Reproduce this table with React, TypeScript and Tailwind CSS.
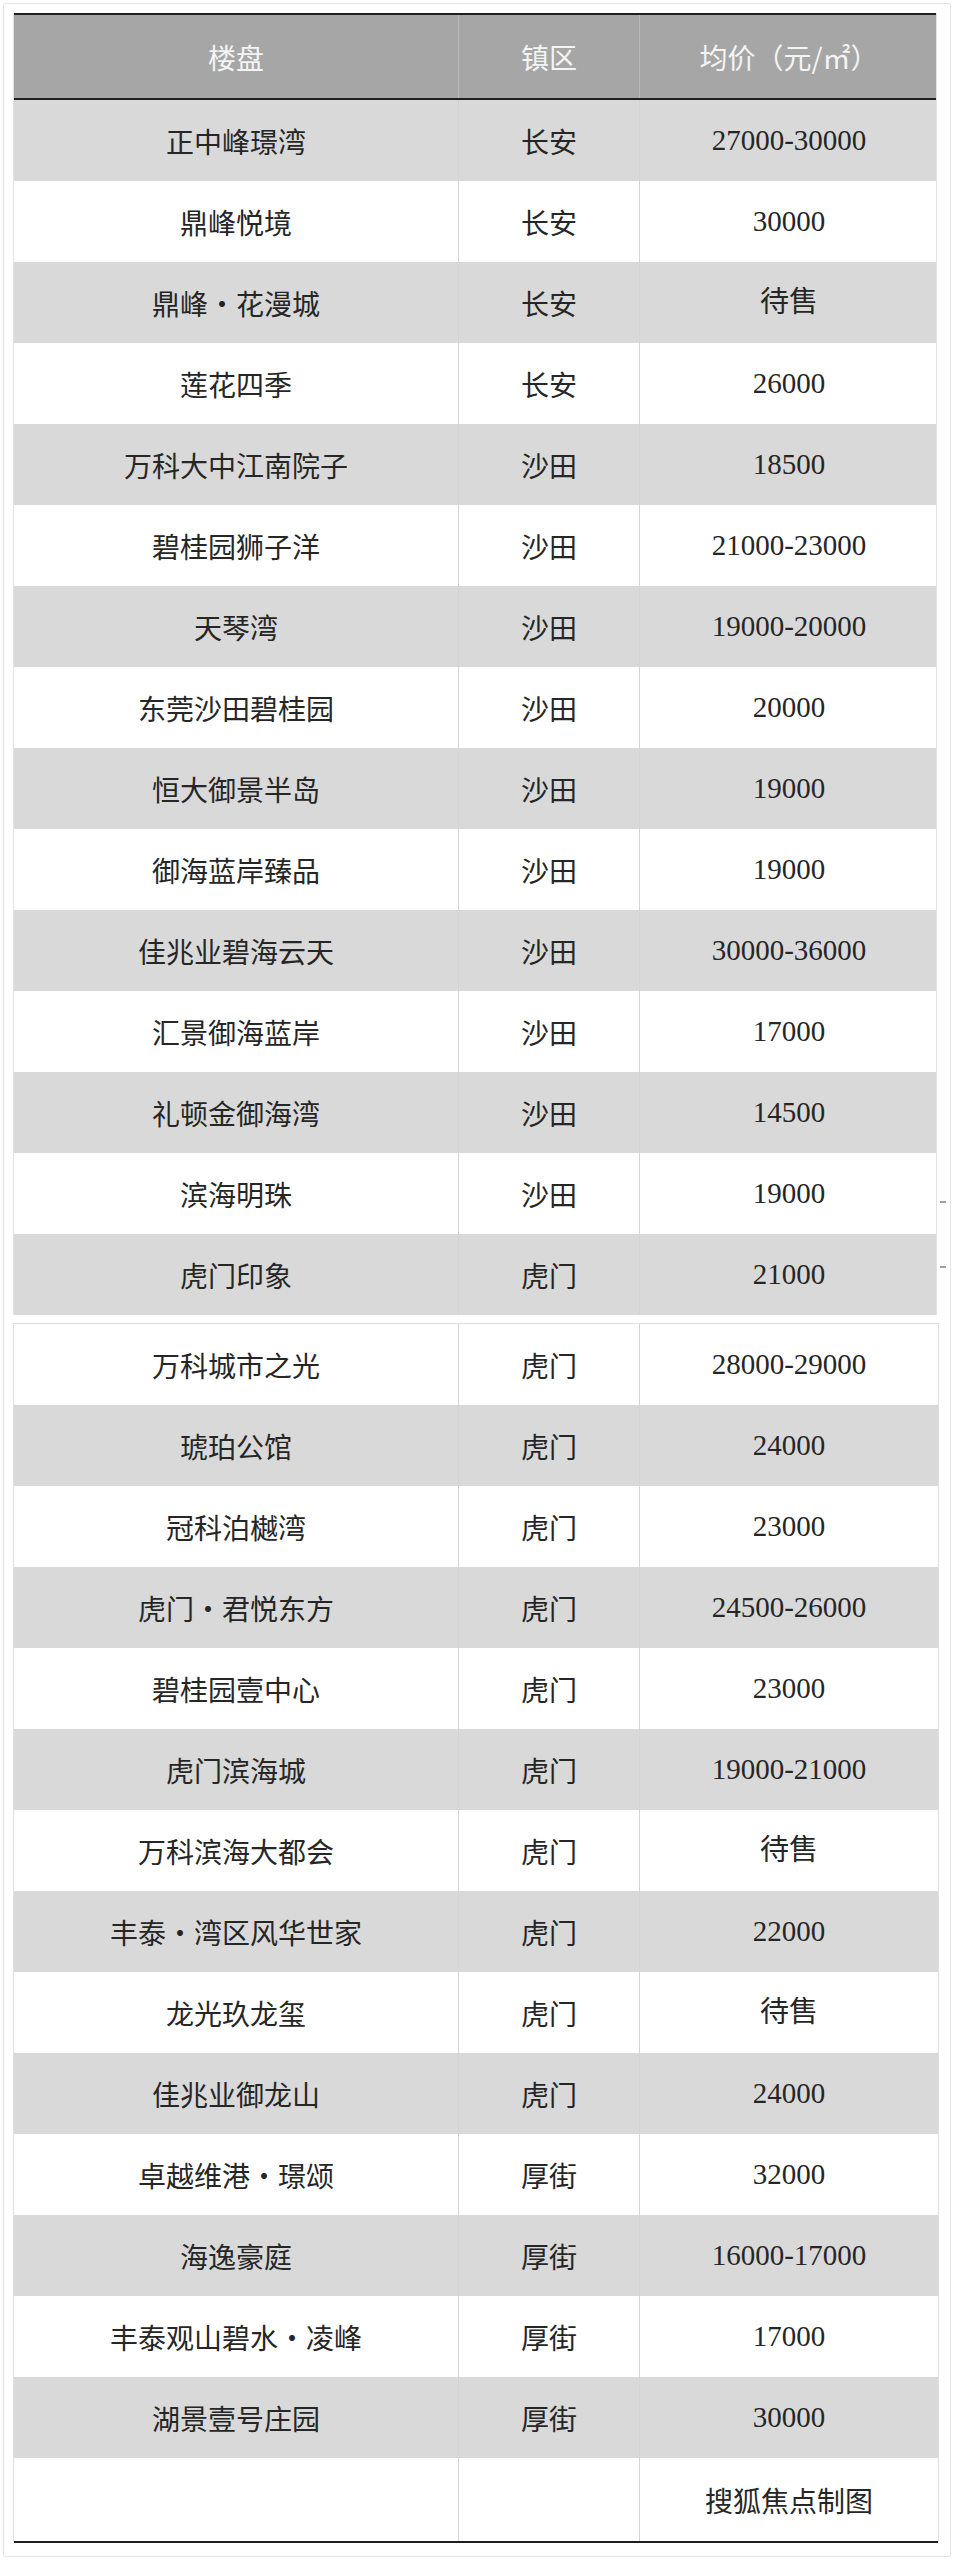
type Row = [name: string, town: string, price: string];

const blockA: Row[] = [
  ['正中峰璟湾', '长安', '27000-30000'],
  ['鼎峰悦境', '长安', '30000'],
  ['鼎峰·花漫城', '长安', '待售'],
  ['莲花四季', '长安', '26000'],
  ['万科大中江南院子', '沙田', '18500'],
  ['碧桂园狮子洋', '沙田', '21000-23000'],
  ['天琴湾', '沙田', '19000-20000'],
  ['东莞沙田碧桂园', '沙田', '20000'],
  ['恒大御景半岛', '沙田', '19000'],
  ['御海蓝岸臻品', '沙田', '19000'],
  ['佳兆业碧海云天', '沙田', '30000-36000'],
  ['汇景御海蓝岸', '沙田', '17000'],
  ['礼顿金御海湾', '沙田', '14500'],
  ['滨海明珠', '沙田', '19000'],
  ['虎门印象', '虎门', '21000'],
];

const blockB: Row[] = [
  ['万科城市之光', '虎门', '28000-29000'],
  ['琥珀公馆', '虎门', '24000'],
  ['冠科泊樾湾', '虎门', '23000'],
  ['虎门·君悦东方', '虎门', '24500-26000'],
  ['碧桂园壹中心', '虎门', '23000'],
  ['虎门滨海城', '虎门', '19000-21000'],
  ['万科滨海大都会', '虎门', '待售'],
  ['丰泰·湾区风华世家', '虎门', '22000'],
  ['龙光玖龙玺', '虎门', '待售'],
  ['佳兆业御龙山', '虎门', '24000'],
  ['卓越维港·璟颂', '厚街', '32000'],
  ['海逸豪庭', '厚街', '16000-17000'],
  ['丰泰观山碧水·凌峰', '厚街', '17000'],
  ['湖景壹号庄园', '厚街', '30000'],
];

const cjk = "font-['Noto_Sans_CJK_SC',sans-serif]";
const num = "font-['Liberation_Serif','Noto_Sans_CJK_SC',serif]";
const cols = 'grid grid-cols-[444px_181px_299px]';
const cell = 'flex items-center justify-center';
const divider = 'border-l border-[#d4d4d4]';

/** 一行：楼盘 / 镇区 / 均价，偶数行灰底 */
function TableRow({ row, gray }: { row: Row; gray: boolean }) {
  const [name, town, price] = row;
  return (
    <div className={`${cols} h-[81px] ${gray ? 'bg-[#d9d9d9]' : 'bg-white'} text-[#262626]`}>
      <div className={`${cell} ${cjk} text-[28px]`}>{name}</div>
      <div className={`${cell} ${divider} ${cjk} text-[28px]`}>{town}</div>
      <div className={`${cell} ${divider} ${num} text-[29px]`}>{price}</div>
    </div>
  );
}

export default function App() {
  return (
    <div className="min-h-[2560px] bg-white pt-[3px] pl-[3px]">
      <div className="relative h-[2554px] w-[948px] rounded-[3px] border border-[#e4e4e4] pl-[9px] pt-[9px]">
        {/* 上半表 */}
        <div className="w-[924px] border-x border-[#e2e2e2]">
          <div
            className={`${cols} h-[87px] border-y-2 border-[#1f1f1f] bg-[#a6a6a6] ${cjk} text-[28px] text-[#f4f4f4]`}
          >
            <div className={cell}>楼盘</div>
            <div className={`${cell} border-l border-[#b8b8b8]`}>镇区</div>
            <div className={`${cell} border-l border-[#b8b8b8]`}>均价（元/㎡）</div>
          </div>
          {blockA.map((r, i) => (
            <TableRow key={r[0]} row={r} gray={i % 2 === 0} />
          ))}
        </div>

        {/* 下半表（截图拼接处） */}
        <div className="mt-[8px] w-[926px] border-x border-t border-[#e0e0e0]">
          {blockB.map((r, i) => (
            <TableRow key={r[0]} row={r} gray={(i + blockA.length) % 2 === 0} />
          ))}
          <div className={`${cols} h-[85px] border-b-2 border-[#1f1f1f] bg-white text-[#262626]`}>
            <div />
            <div className={divider} />
            <div className={`${cell} ${divider} ${cjk} text-[28px]`}>搜狐焦点制图</div>
          </div>
        </div>

        <span className="absolute left-[936px] top-[1197px] h-[2px] w-[6px] bg-[#a0a0a0]" />
        <span className="absolute left-[936px] top-[1262px] h-[2px] w-[6px] bg-[#a0a0a0]" />
      </div>
    </div>
  );
}
